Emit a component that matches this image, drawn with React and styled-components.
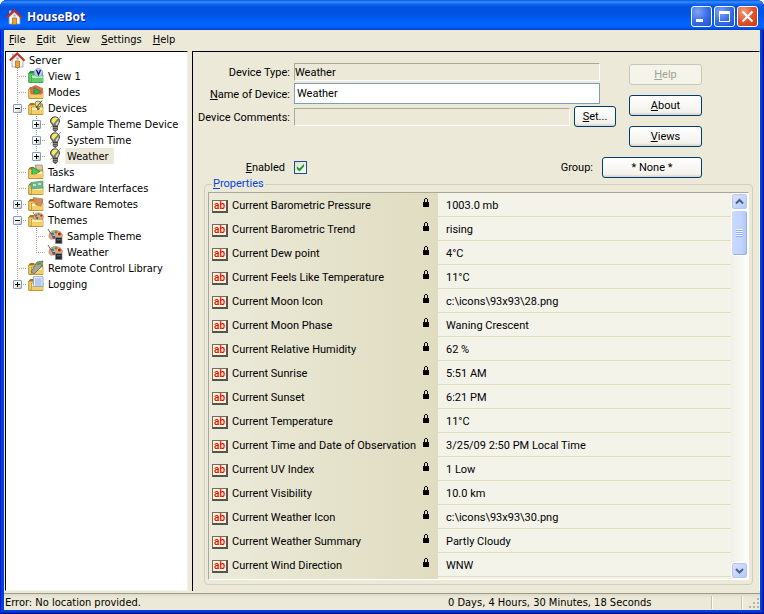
import React, { useState } from 'react';
import styled, { createGlobalStyle, css } from 'styled-components';

const uiFont = "'DejaVu Sans Condensed', 'DejaVu Sans', sans-serif";
const formFont = "Roboto, 'Liberation Sans', sans-serif";

const GlobalStyle = createGlobalStyle`
  * {
    box-sizing: border-box;
  }

  body {
    margin: 0;
    background: #fff;
    color: #000;
    font-family: ${uiFont};
    font-size: 11px;
    line-height: 16px;
  }

  button,
  input {
    font: inherit;
    color: inherit;
  }
`;

const Window = styled.div`
  height: 100vh;
  display: flex;
  flex-direction: column;
  padding: 0 4px 4px;
  border-radius: 7px 7px 0 0;
  overflow: hidden;
  background: #0040e0;
  box-shadow: inset 1px 0 #0019cf, inset -1px -1px #001590, inset -2px -2px #0026c0;
`;

const TitleBar = styled.header`
  height: 30px;
  flex: none;
  display: flex;
  align-items: center;
  gap: 5px;
  margin: 0 -4px;
  padding: 3px 6px 0 6px;
  background: linear-gradient(
    #0058e0 0,
    #3b8dfd 2px,
    #1068f0 4px,
    #0053e1 7px,
    #0054e3 14px,
    #0066ff 24px,
    #0060fc 27px,
    #0040c8 30px
  );
`;

const Title = styled.h1`
  flex: 1;
  margin: 0;
  color: #fff;
  font-family: 'Open Sans', sans-serif;
  font-size: 12px;
  font-weight: 700;
  text-shadow: 1px 1px #0f1089;
`;

const Captions = styled.div`
  display: flex;
  gap: 2px;
`;

const CaptionButton = styled.button`
  width: 21px;
  height: 21px;
  padding: 0;
  border: 1px solid #fff;
  border-radius: 3px;
  background: ${(p) =>
    p.$close
      ? 'radial-gradient(circle at 30% 25%, #f0a080, #e4512b 50%, #c63a12)'
      : 'radial-gradient(circle at 30% 25%, #7ea6f6, #3a6fe8 50%, #1c4fd2)'};

  svg {
    display: block;
  }
`;

const MenuBar = styled.nav`
  height: 20px;
  flex: none;
  display: flex;
  align-items: center;
  gap: 11px;
  padding: 0 5px;
  background: #ece9d8;
`;

const MenuItem = styled.button`
  padding: 0;
  border: 0;
  background: none;
`;

const Body = styled.main`
  flex: 1;
  min-height: 0;
  display: flex;
  gap: 4px;
  padding: 1px 0 2px 1px;
  background: #ece9d8;
`;

const TreePane = styled.aside`
  width: 183px;
  flex: none;
  padding-left: 2px;
  overflow: hidden;
  border: 1px solid #000;
  border-right-color: #f4f2e8;
  border-bottom-color: #f4f2e8;
  background: #fff;
`;

const TreeRow = styled.div`
  height: 16px;
  display: flex;
`;

const dots = '#a8a595 0 1px, transparent 1px 2px';

const Branch = styled.div`
  width: 19px;
  flex: none;
  display: flex;
  align-items: center;
  justify-content: center;
  background-repeat: no-repeat;
  background-image: repeating-linear-gradient(to bottom, ${dots}), repeating-linear-gradient(to right, ${dots});
  background-position: 9px 0, 9px 8px;
  background-size: ${(p) => (p.$last ? '1px 9px' : '1px 100%')}, ${(p) => (p.$through ? '0 0' : '10px 1px')};
`;

const Expander = styled.button`
  width: 9px;
  height: 9px;
  padding: 0;
  border: 1px solid #7b9ebd;
  border-radius: 1px;
  background: linear-gradient(135deg, #fff 40%, #cfcabb);

  svg {
    display: block;
  }
`;

const TreeIcon = styled.svg`
  width: 16px;
  height: 16px;
  flex: none;
  margin: 0 2px 0 1px;
`;

const TreeLabel = styled.span`
  padding: 1px 5px 0 2px;
  white-space: nowrap;
  background: ${(p) => (p.$selected ? '#ece9d8' : 'none')};
`;

const Panel = styled.section`
  flex: 1;
  min-width: 0;
  display: flex;
  flex-direction: column;
  border-top: 1px solid #000;
  border-left: 1px solid #000;
  border-right: 1px solid #fff;
  padding: 11px 6px 6px 11px;
  font-family: ${formFont};
`;

const Form = styled.form`
  display: flex;
  flex-direction: column;
  gap: 10px;
  padding-right: 51px;
`;

const FormTop = styled.div`
  display: flex;
  gap: 13px;
`;

const Fields = styled.div`
  flex: 1;
  min-width: 0;
  display: flex;
  flex-direction: column;
  gap: 2px;
`;

const FieldRow = styled.div`
  display: flex;
  align-items: center;
  gap: 4px;
  padding-right: ${(p) => (p.$wide ? 0 : 16)}px;
`;

const FieldLabel = styled.label`
  width: 86px;
  flex: none;
  display: flex;
  justify-content: flex-end;
  padding-top: 2px;
  white-space: nowrap;
`;

const Input = styled.input`
  flex: 1;
  min-width: 0;
  height: 21px;
  padding: 0 2px 1px;
  border: 1px solid #7f9db9;
  background: #fff;

  ${(p) =>
    p.readOnly &&
    css`
      height: 18px;
      padding: 0;
      border-color: #aca899 #fff #fff #aca899;
      background: #ece9d8;
    `}
`;

const SideButtons = styled.div`
  width: 73px;
  display: flex;
  flex-direction: column;
  gap: 10px;
  padding-top: 1px;
`;

const Button = styled.button`
  width: ${(p) => p.$width || 'auto'};
  height: 21px;
  flex: none;
  padding: 1px 0 0;
  border: 1px solid #003c74;
  border-radius: 3px;
  background: linear-gradient(#fff, #f3f2ec 85%, #d8d1c5);

  &:disabled {
    border-color: #c9c7ba;
    background: #f5f4ea;
    color: #a1a192;
  }
`;

const EnabledRow = styled.div`
  display: flex;
  align-items: center;
  gap: 9px;
`;

const EnabledLabel = styled.label`
  width: 81px;
  text-align: right;
`;

const Checkbox = styled.input`
  appearance: none;
  width: 13px;
  height: 13px;
  margin: 0;
  border: 1px solid #1c5180;
  background: linear-gradient(135deg, #dcdcd7, #fff);
  display: grid;
  place-items: center;

  &:checked::before {
    content: '';
    width: 9px;
    height: 9px;
    background: #21a121;
    clip-path: polygon(10% 35%, 38% 60%, 90% 8%, 90% 40%, 38% 95%, 10% 68%);
  }
`;

const GroupLabel = styled.label`
  margin-left: auto;
`;

const Properties = styled.fieldset`
  flex: 1;
  min-width: 0;
  min-height: 0;
  display: flex;
  margin: 0;
  padding: 2px 3px 4px;
  border: 1px solid #d0d0bf;
  border-radius: 4px;
`;

const Legend = styled.legend`
  margin-left: 4px;
  padding: 0 1px;
  color: #0046d5;
  line-height: 12px;
`;

const List = styled.div`
  flex: 1;
  min-width: 0;
  display: flex;
  overflow: hidden;
  border: 1px solid #fff;
  border-top-color: #aca899;
  border-left-color: #aca899;
  background: linear-gradient(to right, #eceada, #e0dcc0 229px, #f4f3ea 229px);
`;

const TableArea = styled.div`
  flex: 1;
  min-width: 0;
  height: 0;
`;

const Table = styled.table`
  width: 100%;
  border-spacing: 0;
  table-layout: fixed;
`;

const NameCell = styled.th`
  width: 229px;
  height: 24px;
  padding: 2px 8px 0 3px;
  font-weight: 400;
  text-align: left;
`;

const NameContent = styled.div`
  display: flex;
  align-items: center;
  gap: 4px;
  white-space: nowrap;

  span {
    flex: 1;
  }

  > svg {
    align-self: flex-start;
  }
`;

const ValueCell = styled.td`
  padding: 2px 8px 0;
  border-bottom: 1px solid #e0dcbe;
  white-space: nowrap;
`;

const ScrollBar = styled.div`
  width: 17px;
  flex: none;
  display: flex;
  flex-direction: column;
  background: linear-gradient(to right, #f0efe8, #fdfdfa);
`;

const ScrollButton = styled.button`
  width: 17px;
  height: 17px;
  padding: 0;
  border: 1px solid #fff;
  border-radius: 3px;
  background: linear-gradient(135deg, #dbe6ff, #b4c8f8);
  box-shadow: inset 0 0 0 1px #b4c6f0;

  svg {
    display: block;
  }
`;

const ScrollThumb = styled.div`
  height: 46px;
  display: grid;
  place-content: center;
  gap: 1px;
  border: 1px solid #fff;
  border-radius: 3px;
  background: linear-gradient(to right, #c9d8fc, #c2d3fd 60%, #b0c6f8);
  box-shadow: inset -1px -1px #98b0e8;

  i {
    width: 7px;
    height: 1px;
    background: #8cb0f8;
    box-shadow: 0 -1px #eef4fe;
  }
`;

const Track = styled.div`
  flex: 1;
`;

const StatusBar = styled.footer`
  height: 17px;
  flex: none;
  display: flex;
  align-items: center;
  padding: 1px 0 0 1px;
  border-top: 1px solid #9d9a8a;
  background: linear-gradient(#dedbca, #ece9d8 4px);
`;

const StatusText = styled.span`
  flex: 1;
`;

const Uptime = styled.span`
  width: 263px;
`;

const StatusCell = styled.span`
  width: ${(p) => p.$width};
  height: 13px;
  display: flex;
  justify-content: flex-end;
  border-left: 1px solid #c5c2b0;
  box-shadow: inset 1px 0 #fff;
`;

const House = () => (
  <>
    <path d="M3 8 8.5 3 14 8v7H3z" fill="#f4f4f8" stroke="#8a96ae" strokeWidth=".7" />
    <path d="M3 1.5h2.5V5L3 7z" fill="#b5bfd2" />
    <path d="M.7 8.5 8.2 1.5 15.5 8.7" fill="none" stroke="#c83018" strokeWidth="2" />
    <path d="M6.5 9h4v6.5h-4z" fill="#e9a52c" stroke="#9d6510" strokeWidth=".7" />
    <path d="M7.5 5.5h2v2h-2z" fill="#8eabd0" />
  </>
);

const Folder = ({ color = '#f2cd68', dark = '#a87812', light = '#fff0a8' }) => (
  <>
    <path d="M1 4.5 2.2 3H6l1.2 2H15v9.5H1z" fill={dark} />
    <path d="M.7 5h5l1-1h7.8v10.3H.7z" fill={color} stroke={dark} strokeWidth=".8" />
    <path d="M3.5 7H15v7.5H3.5z" fill={light} stroke={dark} strokeWidth=".6" />
    <path d="M4 10h10.7v4H4z" fill={color} />
  </>
);

const Palette = () => (
  <>
    <path d="M3 5c3-4 10-3 12 1 1 4-1 5-4 5H6C2 12 1 8 3 5z" fill="#dcab7c" stroke="#a97a58" strokeWidth=".7" />
    <circle cx="5.5" cy="6" r="1.4" fill="#2676d8" />
    <circle cx="9" cy="4.3" r="1.3" fill="#35a33a" />
    <circle cx="12.4" cy="6" r="1.5" fill="#cb1717" />
    <circle cx="7" cy="9.3" r="1.4" fill="#2858b8" />
    <path d="m1 1 6 10" stroke="#9a5a40" strokeWidth="1" />
  </>
);

const icons = {
  house: <House />,
  view: (
    <>
      <Folder color="#5fd067" dark="#248c34" light="#b4f3b0" />
      <circle cx="10.5" cy="4.5" r="4.2" fill="#b9c9f2" stroke="#8497cd" strokeWidth=".6" />
      <path d="m8.5 2 2 4.6L12.5 2" fill="none" stroke="#10194f" strokeWidth="1.3" />
    </>
  ),
  modes: (
    <>
      <Folder />
      <path d="M2 8c0-5 5-8 8-6 3 1 5 4 5 7l-2 2H3z" fill="#e06a4a" />
      <path d="M6 3.5v8l7-4z" fill="#36b443" stroke="#158027" strokeWidth=".6" />
      <path d="M1.5 10.5h13V14h-13z" fill="#f2cd68" />
    </>
  ),
  devices: (
    <>
      <Folder />
      <circle cx="10" cy="4" r="3" fill="#e9e06a" stroke="#666" strokeWidth=".8" />
      <path d="m8 8 6-7.5" stroke="#444" />
      <path d="m9 7 3 1-1 2H9z" fill="#667" />
    </>
  ),
  bulb: (
    <>
      <path
        d="M3.5 5C3.5-.5 12.5-.5 12.5 5 12.5 7.5 10.5 8 10.5 10.5H6C6 8 3.5 7.5 3.5 5z"
        fill="#777a6a"
        stroke="#333"
        strokeWidth=".9"
      />
      <path d="M4.5 5.5C4.5 1 9 1 11 2L6.5 8z" fill="#f9ec5a" />
      <path d="M8.5 8.5 11.5 4v2.5l-1.5 3z" fill="#e4e2cc" />
      <path d="M6 10.5h4.500V14l-2.200 1.700L6 14z" fill="#55565a" stroke="#222" strokeWidth=".5" />
      <path d="M6.300 11.500h3.800m-3.800 2h3.800" stroke="#b5b5b5" strokeWidth=".6" />
      <path d="M3.500 11.500 14 0" stroke="#8a8a7a" strokeWidth=".8" />
    </>
  ),
  tasks: (
    <>
      <Folder />
      <path d="M7 1h7l1 5H9z" fill="#d9c8a0" stroke="#8d754d" strokeWidth=".6" />
      <path d="M4 3v9l8-4.5z" fill="#55c45c" stroke="#208a35" strokeWidth=".7" />
      <path d="M1.5 10.5h13V14h-13z" fill="#f2cd68" />
    </>
  ),
  hardware: (
    <>
      <Folder />
      <path d="M3 2.5 15 1v7L3 9z" fill="#68b987" stroke="#4c8f69" strokeWidth=".6" />
      <path d="M5 4h3v2H5zm5-1h3v2h-3z" fill="#c4e2d2" />
    </>
  ),
  remotes: (
    <>
      <Folder />
      <path d="m5 1.5 10 1.5-2 7-5-1z" fill="#dc8a4a" stroke="#8b8078" strokeWidth=".7" />
    </>
  ),
  themes: (
    <>
      <Folder />
      <g transform="translate(4 -1) scale(.75)">
        <Palette />
      </g>
    </>
  ),
  theme: (
    <>
      <Palette />
      <path d="M8.5 9.5H15v6H8.5z" fill="#25272e" stroke="#84868c" strokeWidth=".7" />
      <path d="M10 11h3.5v1.5H10z" fill="#56606e" />
    </>
  ),
  library: (
    <>
      <Folder />
      <path d="m3 12 6-10 6-1-2 6-7 7z" fill="#a4a79b" stroke="#50564f" strokeWidth=".7" />
      <path d="m9.5 3 4-1-1 2.5-4 .5z" fill="#3da048" />
    </>
  ),
  logging: (
    <>
      <Folder />
      <path d="M5.5.5H15v10H5.5z" fill="#e2ecfd" stroke="#7b97cf" strokeWidth=".7" />
      <path d="M7 3h6.5M7 5h6.5M7 7h6.5M7 9h6.5" stroke="#7798da" strokeWidth=".8" />
    </>
  ),
};

const nodes = [
  { label: 'View 1', icon: 'view' },
  { label: 'Modes', icon: 'modes' },
  {
    label: 'Devices',
    icon: 'devices',
    open: true,
    children: [
      { label: 'Sample Theme Device', icon: 'bulb', closed: true },
      { label: 'System Time', icon: 'bulb', closed: true },
      { label: 'Weather', icon: 'bulb', closed: true, selected: true },
    ],
  },
  { label: 'Tasks', icon: 'tasks' },
  { label: 'Hardware Interfaces', icon: 'hardware' },
  { label: 'Software Remotes', icon: 'remotes', closed: true },
  {
    label: 'Themes',
    icon: 'themes',
    open: true,
    children: [
      { label: 'Sample Theme', icon: 'theme' },
      { label: 'Weather', icon: 'theme' },
    ],
  },
  { label: 'Remote Control Library', icon: 'library' },
  { label: 'Logging', icon: 'logging', closed: true },
];

const properties = [
  ['Current Barometric Pressure', '1003.0 mb'],
  ['Current Barometric Trend', 'rising'],
  ['Current Dew point', '4°C'],
  ['Current Feels Like Temperature', '11°C'],
  ['Current Moon Icon', 'c:\\icons\\93x93\\28.png'],
  ['Current Moon Phase', 'Waning Crescent'],
  ['Current Relative Humidity', '62 %'],
  ['Current Sunrise', '5:51 AM'],
  ['Current Sunset', '6:21 PM'],
  ['Current Temperature', '11°C'],
  ['Current Time and Date of Observation', '3/25/09 2:50 PM Local Time'],
  ['Current UV Index', '1 Low'],
  ['Current Visibility', '10.0 km'],
  ['Current Weather Icon', 'c:\\icons\\93x93\\30.png'],
  ['Current Weather Summary', 'Partly Cloudy'],
  ['Current Wind Direction', 'WNW'],
];

const TreeNode = ({ node, last, depth = 1 }) => {
  const [open, setOpen] = useState(Boolean(node.open));

  return (
    <>
      <TreeRow role="treeitem" aria-selected={Boolean(node.selected)}>
        {depth > 1 && <Branch $through />}
        <Branch $last={last}>
          {(node.children || node.closed) && (
            <Expander type="button" aria-label={node.label} aria-expanded={open} onClick={() => setOpen(!open)}>
              <svg width="7" height="7" viewBox="0 0 7 7" shapeRendering="crispEdges">
                <path d={open ? 'M1 3h5v1H1z' : 'M1 3h5v1H1zM3 1h1v5H3z'} />
              </svg>
            </Expander>
          )}
        </Branch>
        <TreeIcon viewBox="0 0 16 16">{icons[node.icon]}</TreeIcon>
        <TreeLabel $selected={node.selected}>{node.label}</TreeLabel>
      </TreeRow>
      {open &&
        node.children?.map((child, i) => (
          <TreeNode key={child.label} node={child} depth={depth + 1} last={i === node.children.length - 1} />
        ))}
    </>
  );
};

const TypeBadge = styled.b`
  width: 16px;
  height: 13px;
  flex: none;
  border: 1px solid #6f6e66;
  border-right: 2px solid #55544e;
  border-bottom: 2px solid #55544e;
  background: #fbf5d0;
  color: #f00000;
  font-size: 10px;
  font-weight: 500;
  line-height: 9px;
  text-align: center;
`;

const Lock = () => (
  <svg width="8" height="10" viewBox="0 0 8 10" shapeRendering="crispEdges">
    <path d="M1 4h6v5H1zM2 1h1v3H2zM5 1h1v3H5zM3 0h2v1H3z" />
  </svg>
);

const Chevron = ({ down }) => (
  <svg width="15" height="15" viewBox="0 0 15 15">
    <path d={down ? 'm4 6 3.5 3.5L11 6' : 'M4 9.5 7.5 6 11 9.5'} fill="none" stroke="#4d6185" strokeWidth="2" />
  </svg>
);

const Grip = () => (
  <svg width="13" height="13" viewBox="0 0 13 13" shapeRendering="crispEdges">
    <path d="M10 2h2v2h-2zM6 6h2v2H6zM10 6h2v2h-2zM2 10h2v2H2zM6 10h2v2H6zM10 10h2v2h-2z" fill="#b8b4a3" />
  </svg>
);

const App = () => (
  <>
    <GlobalStyle />
    <Window>
      <TitleBar>
        <svg width="16" height="16" viewBox="0 0 16 16">
          <House />
        </svg>
        <Title>HouseBot</Title>
        <Captions>
          <CaptionButton type="button" aria-label="Minimize">
            <svg width="19" height="19" viewBox="0 0 19 19">
              <path d="M4 12h7v3H4z" fill="#fff" />
            </svg>
          </CaptionButton>
          <CaptionButton type="button" aria-label="Maximize">
            <svg width="19" height="19" viewBox="0 0 19 19" shapeRendering="crispEdges">
              <path d="M4 4h11v11H4zM5 7v7h9V7z" fill="#fff" fillRule="evenodd" />
            </svg>
          </CaptionButton>
          <CaptionButton type="button" aria-label="Close" $close>
            <svg width="19" height="19" viewBox="0 0 19 19">
              <path d="m4.5 4.5 10 10m0-10-10 10" stroke="#fff" strokeWidth="2.2" />
            </svg>
          </CaptionButton>
        </Captions>
      </TitleBar>

      <MenuBar>
        {['File', 'Edit', 'View', 'Settings', 'Help'].map((item) => (
          <MenuItem key={item} type="button">
            <u>{item[0]}</u>
            {item.slice(1)}
          </MenuItem>
        ))}
      </MenuBar>

      <Body>
        <TreePane role="tree">
          <TreeRow role="treeitem">
            <TreeIcon viewBox="0 0 16 16">{icons.house}</TreeIcon>
            <TreeLabel>Server</TreeLabel>
          </TreeRow>
          {nodes.map((node, i) => (
            <TreeNode key={node.label} node={node} last={i === nodes.length - 1} />
          ))}
        </TreePane>

        <Panel>
          <Form onSubmit={(e) => e.preventDefault()}>
            <FormTop>
              <Fields>
                <FieldRow>
                  <FieldLabel htmlFor="type">Device Type:</FieldLabel>
                  <Input id="type" readOnly value="Weather" />
                </FieldRow>
                <FieldRow>
                  <FieldLabel htmlFor="name">
                    <u>N</u>ame of Device:
                  </FieldLabel>
                  <Input id="name" defaultValue="Weather" />
                </FieldRow>
                <FieldRow $wide>
                  <FieldLabel htmlFor="comments">Device Comments:</FieldLabel>
                  <Input id="comments" readOnly value="" />
                  <Button type="button" $width="42px">
                    <u>S</u>et...
                  </Button>
                </FieldRow>
              </Fields>
              <SideButtons>
                <Button type="button" disabled>
                  <u>H</u>elp
                </Button>
                <Button type="button">
                  <u>A</u>bout
                </Button>
                <Button type="button">
                  <u>V</u>iews
                </Button>
              </SideButtons>
            </FormTop>
            <EnabledRow>
              <EnabledLabel htmlFor="enabled">
                <u>E</u>nabled
              </EnabledLabel>
              <Checkbox id="enabled" type="checkbox" defaultChecked />
              <GroupLabel htmlFor="group">Group:</GroupLabel>
              <Button id="group" type="button" $width="100px">
                * None *
              </Button>
            </EnabledRow>
          </Form>

          <Properties>
            <Legend>
              <u>P</u>roperties
            </Legend>
            <List>
              <TableArea>
                <Table>
                  <tbody>
                    {properties.map(([name, value]) => (
                      <tr key={name}>
                        <NameCell scope="row">
                          <NameContent>
                            <TypeBadge>ab</TypeBadge>
                            <span>{name}</span>
                            <Lock />
                          </NameContent>
                        </NameCell>
                        <ValueCell>{value}</ValueCell>
                      </tr>
                    ))}
                  </tbody>
                </Table>
              </TableArea>
              <ScrollBar>
                <ScrollButton type="button" aria-label="Scroll up">
                  <Chevron />
                </ScrollButton>
                <ScrollThumb>
                  <i />
                  <i />
                  <i />
                  <i />
                </ScrollThumb>
                <Track />
                <ScrollButton type="button" aria-label="Scroll down">
                  <Chevron down />
                </ScrollButton>
              </ScrollBar>
            </List>
          </Properties>
        </Panel>
      </Body>

      <StatusBar>
        <StatusText>Error: No location provided.</StatusText>
        <Uptime>0 Days, 4 Hours, 30 Minutes, 18 Seconds</Uptime>
        <StatusCell $width="30px" />
        <StatusCell $width="19px">
          <Grip />
        </StatusCell>
      </StatusBar>
    </Window>
  </>
);

export default App;
